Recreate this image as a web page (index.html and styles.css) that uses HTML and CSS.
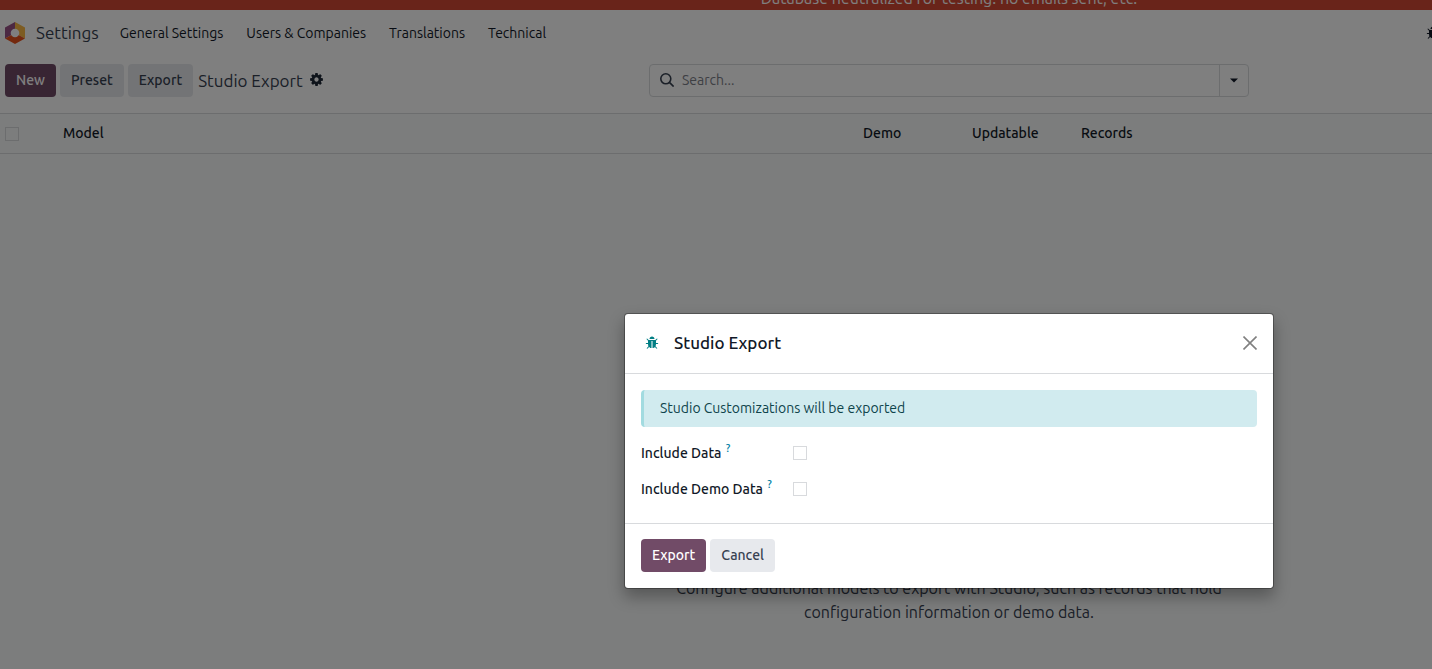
FILE: index.html
```html
<!DOCTYPE html>
<html lang="en">
<head>
<meta charset="utf-8">
<title>Studio Export</title>
<link rel="stylesheet" href="styles.css">
</head>
<body>
<svg class="sprite" aria-hidden="true">
  <symbol id="bug" viewBox="0 0 1792 1792"><path d="M1696 960q0 26-19 45t-45 19h-224q0 171-67 290l208 209q19 19 19 45t-19 45q-18 19-45 19t-45-19l-198-197q-5 5-15 13t-42 28.500-65 36.500-82 29-97 13v-896h-128v896q-51 0-101.500-13.500t-87-33-66-39-43.500-32.500l-15-14-183 207q-20 21-48 21-24 0-43-16-19-18-20.500-44.500t15.500-46.500l202-227q-58-114-58-274h-224q-26 0-45-19t-19-45 19-45 45-19h224v-294l-173-173q-19-19-19-45t19-45 45-19 45 19l173 173h844l173-173q19-19 45-19t45 19 19 45-19 45l-173 173v294h224q26 0 45 19t19 45zm-480-576h-640q0-133 93.500-226.500t226.500-93.500 226.500 93.500 93.500 226.500z"/></symbol>
</svg>
<div class="page">
  <div class="banner">Database neutralized for testing: no emails sent, etc.</div>
  <header class="navbar">
    <a class="brand" href="#">
      <svg class="logo" viewBox="0 0 20 22" aria-hidden="true">
        <path fill="#985184" d="M10 0v11L0 16.500V5.500z"/>
        <path fill="#fbb945" d="M10 0l10 5.500v11L10 11z"/>
        <path fill="#e8531d" d="M0 16.500L10 11l10 5.500L10 22z"/>
        <circle cx="10" cy="11" r="4.300" fill="#fff"/>
      </svg>
      <span>Settings</span>
    </a>
    <nav class="menu">
      <a href="#">General Settings</a>
      <a href="#">Users &amp; Companies</a>
      <a href="#">Translations</a>
      <a href="#">Technical</a>
    </nav>
    <button class="debug" aria-label="Debug"><svg class="icon"><use href="#bug"/></svg></button>
  </header>
  <div class="control">
    <div class="actions">
      <button class="btn primary">New</button>
      <button class="btn">Preset</button>
      <button class="btn">Export</button>
      <span class="crumb">Studio Export</span>
      <button class="gear" aria-label="Actions">
        <svg class="icon" viewBox="0 0 1792 1792"><path d="M1152 896q0-106-75-181t-181-75-181 75-75 181 75 181 181 75 181-75 75-181zm512-109v222q0 12-8 23t-20 13l-185 28q-19 54-39 91 35 50 107 138 10 12 10 25t-9 23q-27 37-99 108t-94 71q-12 0-26-9l-138-108q-44 23-91 38-16 136-29 186-7 28-36 28h-222q-14 0-24.500-8.500t-11.500-21.500l-28-184q-49-16-90-37l-141 107q-10 9-25 9-14 0-25-11-126-114-165-168-7-10-7-23 0-12 8-23 15-21 51-66.500t54-70.500q-27-50-41-99l-183-27q-13-2-21-12.500t-8-23.500v-222q0-12 8-23t19-13l186-28q14-46 39-92-40-57-107-138-10-12-10-24 0-10 9-23 26-36 98.500-107.500t94.500-71.500q13 0 26 10l138 107q44-23 91-38 16-136 29-186 7-28 36-28h222q14 0 24.500 8.500t11.500 21.500l28 184q49 16 90 37l142-107q9-9 24-9 13 0 25 10 129 119 165 170 7 8 7 22 0 12-8 23-15 21-51 66.500t-54 70.500q26 50 41 98l183 28q13 2 21 12.500t8 23.500z"/></svg>
      </button>
    </div>
    <div class="search">
      <svg class="lens" viewBox="0 0 14 14" aria-hidden="true"><circle cx="5.800" cy="5.800" r="5"/><path d="M9.400 9.400l4.200 4.200"/></svg>
      <input type="text" placeholder="Search..." aria-label="Search">
      <button class="toggle" aria-label="Search options"><svg viewBox="0 0 8 5"><path d="M0 0.500h8L4 4.500z"/></svg></button>
    </div>
  </div>
  <main class="content">
    <table class="list">
      <thead>
        <tr>
          <th class="col-check"><input type="checkbox" aria-label="Select all"></th>
          <th class="col-model">Model</th>
          <th class="col-flag">Demo</th>
          <th class="col-flag">Updatable</th>
          <th>Records</th>
        </tr>
      </thead>
    </table>
    <p class="empty">Configure additional models to export with Studio, such as records that hold configuration information or demo data.</p>
  </main>
  <div class="backdrop">
    <section class="dialog" role="dialog" aria-labelledby="title">
      <header class="dialog-head">
        <svg class="icon"><use href="#bug"/></svg>
        <h1 id="title">Studio Export</h1>
        <button class="close" aria-label="Close"><svg viewBox="0 0 14 14"><path d="M0.500 0.500l13 13M13.500 0.500l-13 13"/></svg></button>
      </header>
      <div class="dialog-body">
        <div class="alert">Studio Customizations will be exported</div>
        <div class="field"><label for="data">Include Data <sup>?</sup></label><input type="checkbox" id="data"></div>
        <div class="field"><label for="demo">Include Demo Data <sup>?</sup></label><input type="checkbox" id="demo"></div>
      </div>
      <footer class="dialog-foot">
        <button class="btn primary">Export</button>
        <button class="btn">Cancel</button>
      </footer>
    </section>
  </div>
</div>
</body>
</html>
```
FILE: styles.css
```css
* {
  box-sizing: border-box;
}

body {
  margin: 0;
  overflow: hidden;
  font: 14px/20px Ubuntu, "Noto Sans", sans-serif;
  color: #374151;
}

button,
input {
  font: inherit;
  color: inherit;
}

button {
  padding: 0;
  border: 0;
  background: none;
}

a {
  color: inherit;
  text-decoration: none;
}

.sprite {
  display: none;
}

.icon {
  display: block;
  width: 14px;
  height: 14px;
  fill: currentColor;
}

/* The workspace is wider than the window and runs off its right edge. */
.page {
  position: relative;
  display: flex;
  flex-direction: column;
  width: calc(100vw + 466px);
  height: 100vh;
}

.banner {
  display: flex;
  flex: none;
  align-items: flex-end;
  justify-content: center;
  height: 10px;
  overflow: hidden;
  background: #d34834;
  color: #fff;
  font-size: 16px;
  line-height: 24px;
}

.navbar {
  display: flex;
  flex: none;
  align-items: center;
  height: 46px;
  padding: 0 458px 0 5px;
  background: #fff;
}

.brand {
  display: flex;
  align-items: center;
  gap: 11px;
  margin-right: 21px;
  font-size: 17px;
}

.logo {
  width: 20px;
  height: 22px;
}

.menu {
  display: flex;
  gap: 23px;
  color: #111827;
}

.debug {
  margin-left: auto;
  color: #111827;
}

.control {
  display: grid;
  grid-template-columns: 1fr 600px 1fr;
  flex: none;
  align-items: center;
  height: 57px;
  padding: 0 5px 8px;
  background: #fff;
}

.actions {
  display: flex;
  align-items: center;
  gap: 4px;
}

.btn {
  height: 33px;
  padding: 0 11px 2px;
  border-radius: 4px;
  background: #e7e9ed;
  font-weight: 500;
}

.btn.primary {
  background: #714b67;
  color: #fff;
}

.crumb {
  padding-left: 1px;
  font-size: 17px;
}

.gear {
  margin-left: 2px;
  padding-bottom: 2px;
  color: #1f2937;
}

.gear .icon {
  width: 15px;
  height: 15px;
}

.search {
  display: flex;
  align-items: center;
  height: 33px;
  border: 1px solid #d8dadd;
  border-radius: 4px;
}

.lens {
  flex: none;
  width: 14px;
  height: 14px;
  margin: 0 8px 2px 10px;
  fill: none;
  stroke: #374151;
  stroke-width: 1.6;
}

.search input {
  flex: 1;
  min-width: 0;
  padding: 0 0 2px;
  border: 0;
  outline: 0;
  background: none;
}

.search input::placeholder {
  color: #7c8088;
}

.toggle {
  display: flex;
  align-items: center;
  justify-content: center;
  align-self: stretch;
  width: 29px;
  border-left: 1px solid #d8dadd;
}

.toggle svg {
  width: 8px;
  height: 5px;
  fill: #111827;
}

.content {
  flex: 1;
  background: #f9fbfa;
}

.list {
  width: 100%;
  border-collapse: separate;
  border-spacing: 0;
  table-layout: fixed;
  color: #111827;
}

.list th {
  height: 41px;
  padding: 0 5px 2px;
  border: solid #d8dadd;
  border-width: 1px 0;
  font-weight: 500;
  text-align: left;
}

.list .col-check {
  width: 58px;
  padding-bottom: 0;
}

.list .col-check input {
  display: block;
}

.list .col-model {
  width: 800px;
}

.list .col-flag {
  width: 109px;
}

input[type="checkbox"] {
  appearance: none;
  width: 14px;
  height: 14px;
  margin: 0;
  border: 1px solid #d8dadd;
  background: transparent;
}

.empty {
  max-width: 600px;
  margin: 422px auto 0;
  font-size: 16px;
  line-height: 24px;
  text-align: center;
}

.backdrop {
  position: absolute;
  inset: 0;
  padding-top: 313px;
  background: rgba(0, 0, 0, 0.5);
}

.dialog {
  max-width: 650px;
  margin: 0 auto;
  border: 1px solid rgba(0, 0, 0, 0.3);
  border-radius: 4px;
  background: #fff;
  background-clip: padding-box;
  box-shadow: 0 8px 16px rgba(0, 0, 0, 0.3);
  color: #111827;
}

.dialog-head {
  display: flex;
  align-items: center;
  height: 60px;
  padding: 0 16px 2px 20px;
  border-bottom: 1px solid #d8dadd;
}

.dialog-head .icon {
  margin-right: 15px;
  color: #017e84;
}

.dialog-head h1 {
  margin: 0;
  font-size: 17px;
  font-weight: 500;
}

.close {
  margin-left: auto;
}

.close svg {
  display: block;
  width: 14px;
  height: 14px;
  fill: none;
  stroke: #808080;
  stroke-width: 1.6;
}

.dialog-body {
  display: grid;
  gap: 16px;
  padding: 16px 16px 24px;
}

.alert {
  padding: 8px 16px 9px;
  border-left: 3px solid #a2dbe0;
  border-radius: 4px;
  background: #d1ebef;
  color: #0e444b;
}

.field {
  display: grid;
  grid-template-columns: 152px 1fr;
  align-items: center;
  font-weight: 500;
}

.field sup {
  margin-left: 1px;
  color: #0180a5;
  font-size: 11px;
  line-height: 1;
}

.dialog-foot {
  display: flex;
  gap: 4px;
  padding: 15px 16px 16px;
  border-top: 1px solid #d8dadd;
}

.dialog-foot .btn {
  color: #374151;
}

.dialog-foot .btn.primary {
  color: #fff;
}
```
